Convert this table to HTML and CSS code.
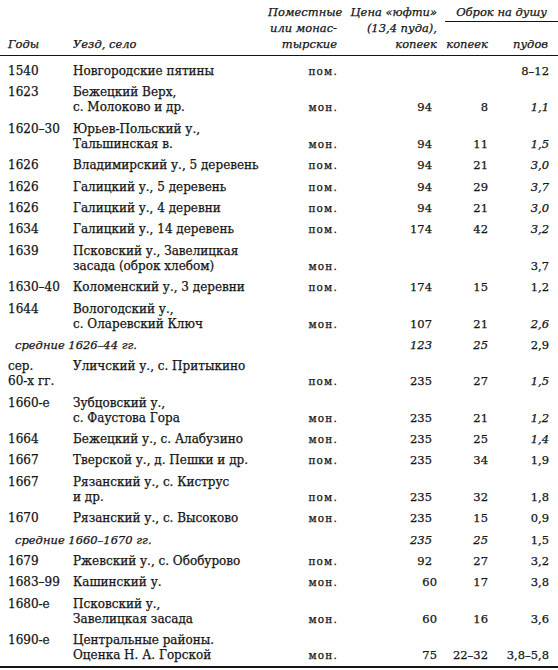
FILE: index.html
```html
<!DOCTYPE html>
<html lang="ru">
<head>
<meta charset="utf-8">
<title>Оброк на душу</title>
<link rel="stylesheet" href="styles.css">
</head>
<body>
<table class="obrok">
  <colgroup>
    <col class="c-year"><col class="c-place"><col class="c-type"><col class="c-price"><col class="c-kop"><col class="c-pud">
  </colgroup>
  <thead>
    <tr class="h1">
      <th rowspan="2" class="year">Годы</th>
      <th rowspan="2" class="place">Уезд, село</th>
      <th rowspan="2" class="type">Поместные<br>или монас-<br>тырские</th>
      <th rowspan="2" class="price">Цена «юфти»<br>(13,4 пуда),<br>копеек</th>
      <th colspan="2" class="group"><div class="group-label">Оброк на душу</div></th>
    </tr>
    <tr class="h2">
      <th class="kop">копеек</th>
      <th class="pud">пудов</th>
    </tr>
  </thead>
  <tbody>
    <tr><td class="year">1540</td><td class="place">Новгородские пятины</td><td class="type">пом.</td><td class="price"></td><td class="kop"></td><td class="pud">8–12</td></tr>
    <tr><td class="year">1623</td><td class="place">Бежецкий Верх,<br>с. Молоково и др.</td><td class="type">мон.</td><td class="price">94</td><td class="kop">8</td><td class="pud it">1,1</td></tr>
    <tr><td class="year">1620–30</td><td class="place">Юрьев-Польский у.,<br>Тальшинская в.</td><td class="type">мон.</td><td class="price">94</td><td class="kop">11</td><td class="pud it">1,5</td></tr>
    <tr><td class="year">1626</td><td class="place">Владимирский у., 5 деревень</td><td class="type">пом.</td><td class="price">94</td><td class="kop">21</td><td class="pud it">3,0</td></tr>
    <tr><td class="year">1626</td><td class="place">Галицкий у., 5 деревень</td><td class="type">пом.</td><td class="price">94</td><td class="kop">29</td><td class="pud it">3,7</td></tr>
    <tr><td class="year">1626</td><td class="place">Галицкий у., 4 деревни</td><td class="type">пом.</td><td class="price">94</td><td class="kop">21</td><td class="pud it">3,0</td></tr>
    <tr><td class="year">1634</td><td class="place">Галицкий у., 14 деревень</td><td class="type">пом.</td><td class="price">174</td><td class="kop">42</td><td class="pud it">3,2</td></tr>
    <tr><td class="year">1639</td><td class="place">Псковский у., Завелицкая<br>засада (оброк хлебом)</td><td class="type">мон.</td><td class="price"></td><td class="kop"></td><td class="pud">3,7</td></tr>
    <tr><td class="year">1630–40</td><td class="place">Коломенский у., 3 деревни</td><td class="type">пом.</td><td class="price">174</td><td class="kop">15</td><td class="pud">1,2</td></tr>
    <tr><td class="year">1644</td><td class="place">Вологодский у.,<br>с. Оларевский Ключ</td><td class="type">мон.</td><td class="price">107</td><td class="kop">21</td><td class="pud it">2,6</td></tr>
    <tr class="avg"><td colspan="2" class="avg-label">средние 1626–44 гг.</td><td class="type"></td><td class="price it">123</td><td class="kop it">25</td><td class="pud">2,9</td></tr>
    <tr><td class="year">сер.<br>60-х гг.</td><td class="place">Уличский у., с. Притыкино<br>&nbsp;</td><td class="type">пом.</td><td class="price">235</td><td class="kop">27</td><td class="pud it">1,5</td></tr>
    <tr><td class="year">1660-е</td><td class="place">Зубцовский у.,<br>с. Фаустова Гора</td><td class="type">мон.</td><td class="price">235</td><td class="kop">21</td><td class="pud it">1,2</td></tr>
    <tr><td class="year">1664</td><td class="place">Бежецкий у., с. Алабузино</td><td class="type">мон.</td><td class="price">235</td><td class="kop">25</td><td class="pud it">1,4</td></tr>
    <tr><td class="year">1667</td><td class="place">Тверской у., д. Пешки и др.</td><td class="type">пом.</td><td class="price">235</td><td class="kop">34</td><td class="pud">1,9</td></tr>
    <tr><td class="year">1667</td><td class="place">Рязанский у., с. Киструс<br>и др.</td><td class="type">пом.</td><td class="price">235</td><td class="kop">32</td><td class="pud">1,8</td></tr>
    <tr><td class="year">1670</td><td class="place">Рязанский у., с. Высоково</td><td class="type">мон.</td><td class="price">235</td><td class="kop">15</td><td class="pud">0,9</td></tr>
    <tr class="avg"><td colspan="2" class="avg-label">средние 1660–1670 гг.</td><td class="type"></td><td class="price it">235</td><td class="kop it">25</td><td class="pud">1,5</td></tr>
    <tr><td class="year">1679</td><td class="place">Ржевский у., с. Обобурово</td><td class="type">пом.</td><td class="price">92</td><td class="kop">27</td><td class="pud">3,2</td></tr>
    <tr><td class="year">1683–99</td><td class="place">Кашинский у.</td><td class="type">мон.</td><td class="price flush">60</td><td class="kop">17</td><td class="pud">3,8</td></tr>
    <tr><td class="year">1680-е</td><td class="place">Псковский у.,<br>Завелицкая засада</td><td class="type">мон.</td><td class="price flush">60</td><td class="kop">16</td><td class="pud">3,6</td></tr>
    <tr><td class="year">1690-е</td><td class="place">Центральные районы.<br>Оценка Н. А. Горской</td><td class="type">мон.</td><td class="price flush">75</td><td class="kop">22–32</td><td class="pud">3,8–5,8</td></tr>
  </tbody>
</table>
</body>
</html>
```

FILE: styles.css
```css
html, body {
  margin: 0;
  padding: 0;
  background: #ffffff;
}

body {
  color: #141414;
  font-family: "DejaVu Serif", "Liberation Serif", serif;
  font-size: 12px;
  -webkit-text-stroke: 0.25px #141414;
}

.obrok {
  width: 558px;
  border-collapse: collapse;
  table-layout: fixed;
}

.c-year { width: 73px; }
.c-place { width: 195px; }
.c-type { width: 72px; }
.c-price { width: 100px; }
.c-kop { width: 53px; }
.c-pud { width: 65px; }

/* header */
.obrok thead th {
  font-weight: normal;
  font-style: italic;
  font-family: "DejaVu Serif", "Liberation Serif", serif;
  font-size: 11.5px;
  line-height: 16px;
  padding: 0;
  vertical-align: bottom;
  white-space: nowrap;
}

.obrok thead th[rowspan] {
  border-bottom: 1.5px solid #141414;
  padding-top: 3px;
  padding-bottom: 3px;
}

.obrok thead th.year { text-align: left; padding-left: 8px; }
.obrok thead th.place { text-align: left; }
.obrok thead th.type { text-align: right; padding-right: 3px; }
.obrok thead th.price { text-align: right; padding-right: 3px; }

.obrok thead th.group {
  padding: 4px 0 0 0;
  text-align: right;
}

.group-label {
  margin-left: 5px;
  padding-right: 11px;
  padding-bottom: 1px;
  border-bottom: 1px solid #141414;
}

.obrok thead tr.h2 th {
  padding-top: 14px;
  padding-bottom: 3px;
  border-bottom: 1.5px solid #141414;
}

.obrok thead th.kop { text-align: right; padding-right: 5px; }
.obrok thead th.pud { text-align: right; padding-right: 10px; }

/* body */
.obrok tbody td {
  line-height: 15px;
  padding: 6.4px 0 0 0;
  vertical-align: bottom;
  white-space: nowrap;
}

.obrok tbody tr:first-child td { padding-top: 8px; }
.obrok tbody tr:last-child td {
  padding-bottom: 3px;
  border-bottom: 2px solid #141414;
}

.obrok tbody td.year { padding-left: 8px; vertical-align: top; }
.obrok tbody td.place { vertical-align: top; }

.obrok tbody td.type {
  text-align: right;
  padding-right: 2px;
  font-size: 10.5px;
  letter-spacing: 1.2px;
}

.obrok tbody td.price {
  text-align: right;
  padding-right: 8px;
  font-size: 11.5px;
}

.obrok tbody td.price.flush { padding-right: 3px; }

.obrok tbody td.kop {
  text-align: right;
  padding-right: 5px;
  font-size: 11.5px;
}

.obrok tbody td.pud {
  text-align: right;
  padding-right: 9px;
  font-size: 11.5px;
}

.obrok tbody td.it { font-style: italic; }

.obrok tbody td.avg-label {
  font-style: italic;
  padding-left: 15px;
  font-size: 11.5px;
}
```
